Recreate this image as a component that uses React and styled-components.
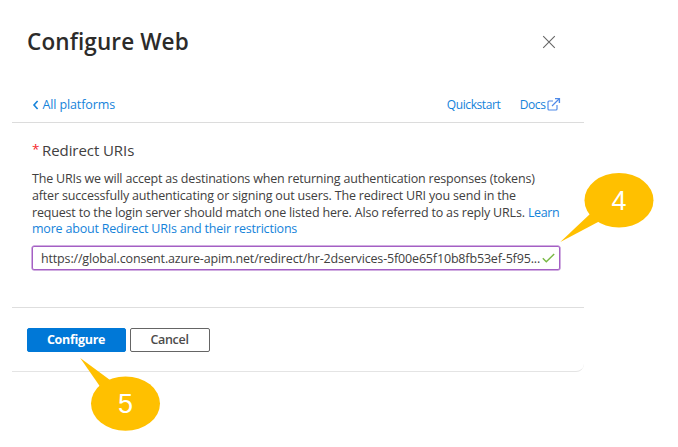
import React from "react";
import styled, { createGlobalStyle } from "styled-components";

const GlobalStyle = createGlobalStyle`
  * { box-sizing: border-box; }
  body { margin: 0; background: #fff; font-family: "Open Sans", "Noto Sans", sans-serif; color: #414040; }
`;

const Page = styled.main`
  position: relative;
  width: 678px;
  height: 447px;
  overflow: hidden;
  background: #fff;
`;

const Panel = styled.section`
  display: flex;
  flex-direction: column;
  width: 572px;
  height: 372px;
  margin-left: 12px;
  border-bottom: 1px solid #e4e4e4;
  border-bottom-right-radius: 8px;
`;

const Header = styled.header`
  display: flex;
  justify-content: space-between;
  align-items: flex-start;
  height: 92px;
  padding: 26px 28px 0 15px;
`;

const Title = styled.h1`
  margin: 0;
  font-size: 22.5px;
  font-weight: 600;
  line-height: 32px;
  letter-spacing: 0.12px;
  color: #2c2b2a;
`;

const CloseButton = styled.button`
  display: flex;
  margin-top: 8.5px;
  padding: 0;
  border: 0;
  background: none;
  color: #666;
`;

const NavBar = styled.nav`
  display: flex;
  align-items: center;
  height: 31px;
  padding: 0 23.5px 5px 20px;
  border-bottom: 1px solid #dcdcdc;
`;

const NavLink = styled.a`
  display: flex;
  align-items: center;
  font-size: ${(p) => (p.$small ? 12 : 12.5)}px;
  line-height: 18px;
  letter-spacing: ${(p) => (p.$small ? -0.42 : -0.12)}px;
  color: #1583da;
  white-space: nowrap;
  svg { flex: none; }
`;

const NavLinks = styled.div`
  display: flex;
  gap: 19.5px;
  margin-left: auto;
`;

const Form = styled.div`
  flex: none;
  height: 184.5px;
  padding: 17px 24px 0 20px;
  border-bottom: 1px solid #dedede;
`;

const FieldLabel = styled.label`
  display: flex;
  gap: 3px;
  font-size: 15px;
  line-height: 20px;
  letter-spacing: -0.07px;
`;

const Required = styled.span`
  width: 7px;
  color: #f5262c;
  font-size: 13.5px;
  line-height: 18px;
  letter-spacing: 0;
`;

const Description = styled.p`
  margin: 11.3px 0 0;
  font-size: 12.5px;
  line-height: 16.7px;
`;

const TextLine = styled.span`
  display: block;
  white-space: nowrap;
  letter-spacing: ${(p) => p.$track}px;
`;

const InlineLink = styled.a`
  color: #1583da;
  letter-spacing: ${(p) => p.$track}px;
`;

const UriField = styled.div`
  display: flex;
  align-items: center;
  height: 24.5px;
  margin-top: 7.7px;
  padding: 0 4px 0 8px;
  border: 1px solid #a45fc4;
  border-radius: 2px;
  box-shadow: 0 0 0 0.5px #a45fc4;
  font-size: 12.5px;
  letter-spacing: -0.16px;
  white-space: nowrap;
  svg { flex: none; margin-left: auto; }
`;

const Footer = styled.footer`
  display: flex;
  gap: 4px;
  padding: 20px 15px 0;
`;

const Button = styled.button`
  width: ${(p) => (p.$primary ? 99 : 80)}px;
  height: 24px;
  padding: 0 1px 1px 0;
  border: 1.3px solid ${(p) => (p.$primary ? "#0078d7" : "#656565")};
  border-radius: 2px;
  background: ${(p) => (p.$primary ? "#0078d7" : "#fff")};
  color: ${(p) => (p.$primary ? "#fff" : "#4c4b4a")};
  font: ${(p) => (p.$primary ? 700 : 600)} 12.5px "Open Sans", sans-serif;
  letter-spacing: -0.3px;
`;

const Callout = styled.div`
  position: absolute;
  left: ${(p) => p.$left}px;
  top: ${(p) => p.$top}px;
  width: ${(p) => p.$width}px;
  height: ${(p) => p.$height}px;
  svg { display: block; }
`;

const CalloutNumber = styled.span`
  position: absolute;
  left: ${(p) => p.$x}px;
  top: ${(p) => p.$y}px;
  transform: translate(-50%, -50%);
  color: #fff;
  font: 27px/30px "Liberation Sans", Arial, sans-serif;
`;

const CloseIcon = () => (
  <svg width="14" height="14" viewBox="0 0 14 14" fill="none" stroke="currentColor" strokeWidth="1.1">
    <path d="M1.2 1.2 12.8 12.8M12.8 1.2 1.2 12.8" />
  </svg>
);

const ChevronIcon = () => (
  <svg width="10.5" height="12" viewBox="0 0 10.5 12" fill="none" stroke="currentColor" strokeWidth="1.6">
    <path d="M5.6 2 2 6l3.6 4" />
  </svg>
);

const ExternalIcon = () => (
  <svg width="15" height="15" viewBox="0 0 15 15" fill="none" stroke="#4f8ae8" strokeWidth="1.15">
    <path d="M7 4H3Q2 4 2 5v7q0 1 1 1h7q1 0 1-1V8M6 9l7-7" />
    <path d="M9 1.6h4.4V6" strokeWidth="1.4" />
  </svg>
);

const CheckIcon = () => (
  <svg width="13" height="10" viewBox="0 0 13 10" fill="none" stroke="#78b843" strokeWidth="1.4">
    <path d="m.8 5.2 3.5 3.5L12.2 1" />
  </svg>
);

export default function App() {
  return (
    <>
      <GlobalStyle />
      <Page>
        <Panel>
          <Header>
            <Title>Configure Web</Title>
            <CloseButton aria-label="Close"><CloseIcon /></CloseButton>
          </Header>
          <NavBar>
            <NavLink><ChevronIcon />All platforms</NavLink>
            <NavLinks>
              <NavLink $small>Quickstart</NavLink>
              <NavLink $small>Docs<ExternalIcon /></NavLink>
            </NavLinks>
          </NavBar>
          <Form>
            <FieldLabel><Required>*</Required>Redirect URIs</FieldLabel>
            <Description>
              <TextLine $track={-0.195}>The URIs we will accept as destinations when returning authentication responses (tokens)</TextLine>
              <TextLine $track={-0.165}>after successfully authenticating or signing out users. The redirect URI you send in the</TextLine>
              <TextLine $track={-0.18}>
                request to the login server should match one listed here. Also referred to as reply URLs.{" "}
                <InlineLink $track={-0.35}>Learn</InlineLink>
              </TextLine>
              <TextLine $track={-0.2}>
                <InlineLink $track={-0.2}>more about Redirect URIs and their restrictions</InlineLink>
              </TextLine>
            </Description>
            <UriField>
              https://global.consent.azure-apim.net/redirect/hr-2dservices-5f00e65f10b8fb53ef-5f95...
              <CheckIcon />
            </UriField>
          </Form>
          <Footer>
            <Button $primary>Configure</Button>
            <Button>Cancel</Button>
          </Footer>
        </Panel>
        <Callout $left={558} $top={170} $width={98} $height={74}>
          <svg width="98" height="74" viewBox="0 0 98 74" fill="#ffc000">
            <ellipse cx="61" cy="30.3" rx="34.5" ry="27.3" />
            <path d="M32 44 2.3 72 41 51.5Z" />
          </svg>
          <CalloutNumber $x={61} $y={31}>4</CalloutNumber>
        </Callout>
        <Callout $left={78} $top={356} $width={84} $height={76}>
          <svg width="84" height="76" viewBox="0 0 84 76" fill="#ffc000">
            <ellipse cx="47.5" cy="47.6" rx="34.5" ry="27.2" />
            <path d="M22 30.5 2.2 2 32 24Z" />
          </svg>
          <CalloutNumber $x={47.5} $y={48}>5</CalloutNumber>
        </Callout>
      </Page>
    </>
  );
}
